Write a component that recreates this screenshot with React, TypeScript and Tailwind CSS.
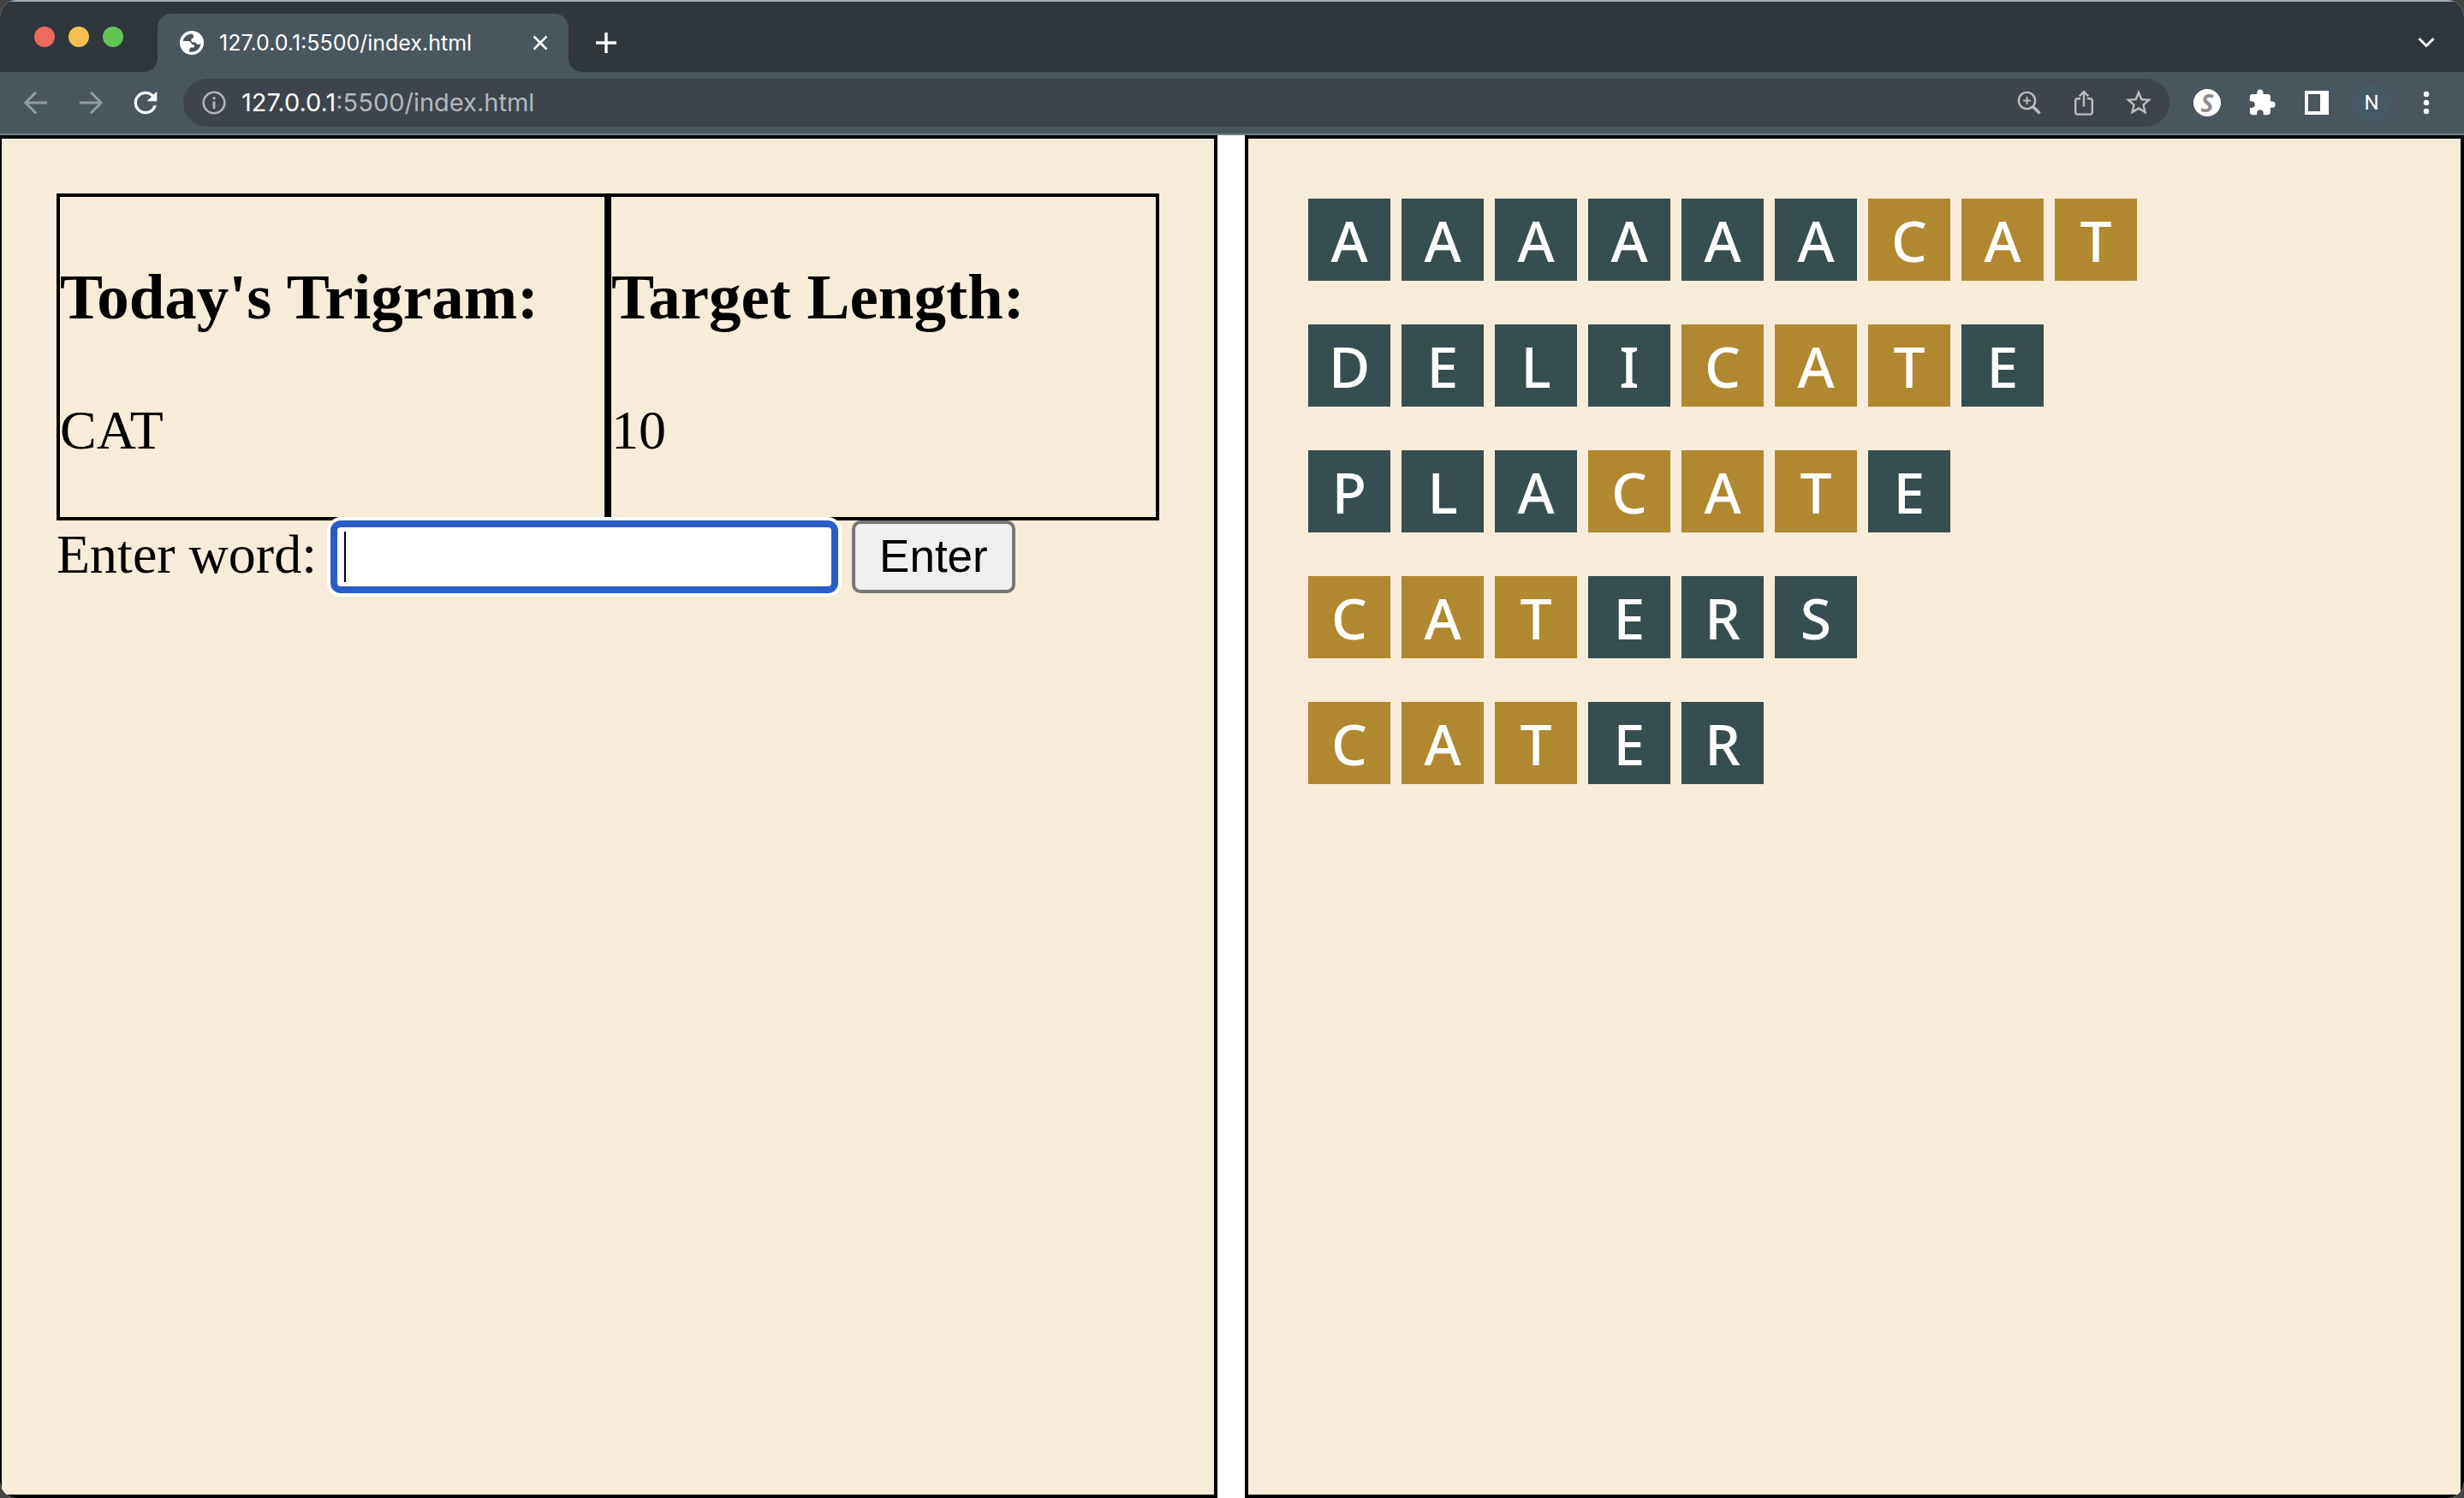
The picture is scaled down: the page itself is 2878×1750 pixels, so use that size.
import React from "react";
import { MdStarBorder, MdExtension, MdRefresh } from "react-icons/md";

const TRIGRAM = "CAT";
const TARGET_LENGTH = 10;
const WORDS = ["AAAAAACAT", "DELICATE", "PLACATE", "CATERS", "CATER"];

function Globe() {
  return (
    <svg viewBox="0 0 28 28" className="size-7" aria-hidden="true">
      <path
        fill="currentColor"
        fillRule="evenodd"
        d="M14 0a14 14 0 1 0 0 28a14 14 0 0 0 0-28ZM14.500 3.400C9 3.600 4.600 7 3.600 12H9c3.200 0 5 1.800 5 4.200h2.800v3.200H13c-1.600 1.200-2 3-2 5c7 1.800 13.200-3.200 13.400-9.600c-2 2.200-5.400 1.200-6-1.200l-4-.400c-1.800-2.400-1.200-4.400 1.600-4.900c.600-1.800-.300-3.600-1.500-4.900Z"
      />
    </svg>
  );
}

function TabBar() {
  return (
    <div className="flex h-[84px] items-end border-t-2 border-[#a4aaad] bg-[#2f363c] pl-10">
      <div className="mb-[29px] flex gap-4">
        <button aria-label="Close window" className="size-6 rounded-full bg-[#ed6a5e]" />
        <button aria-label="Minimize window" className="size-6 rounded-full bg-[#f5bf4f]" />
        <button aria-label="Zoom window" className="size-6 rounded-full bg-[#62c554]" />
      </div>
      <svg className="ml-6 size-4 text-[#49565e]" viewBox="0 0 16 16" aria-hidden="true">
        <path d="M16 0v16H0C9 16 16 9 16 0Z" fill="currentColor" />
      </svg>
      <div className="flex h-[68px] w-[480px] items-center rounded-t-2xl bg-[#49565e] pr-6 pl-[26px] text-white">
        <Globe />
        <span className="ml-[18px] flex-1 text-[25px] leading-8">127.0.0.1:5500/index.html</span>
        <button aria-label="Close tab" className="flex size-[18px] items-center">
          <svg viewBox="0 0 18 18" className="size-[18px]" fill="none" stroke="currentColor" strokeWidth="2.6">
            <path d="M1.5 1.5l15 15M16.5 1.5l-15 15" />
          </svg>
        </button>
      </div>
      <svg className="size-4 text-[#49565e]" viewBox="0 0 16 16" aria-hidden="true">
        <path d="M0 0v16h16C7 16 0 9 0 0Z" fill="currentColor" />
      </svg>
      <button aria-label="New tab" className="mb-[22px] ml-4 text-white">
        <svg viewBox="0 0 24 24" className="size-6" fill="none" stroke="currentColor" strokeWidth="3.4">
          <path d="M12 0v24M0 12h24" />
        </svg>
      </button>
      <button aria-label="Search tabs" className="mr-[34px] mb-[27px] ml-auto text-white">
        <svg viewBox="0 0 20 14" className="h-[14px] w-5" fill="none" stroke="currentColor" strokeWidth="3">
          <path d="M1.5 2L10 10.500L18.500 2" />
        </svg>
      </button>
    </div>
  );
}

function AddressBar() {
  return (
    <div className="flex h-[56px] min-w-0 flex-1 items-center rounded-full bg-[#3d444b] pr-[18px] pl-[22px] text-[#bdbdbd]">
      <svg viewBox="0 0 28 28" className="size-7 text-[#b0b3b5]" fill="none" stroke="currentColor" strokeWidth="2.6">
        <circle cx="14" cy="14" r="12.300" />
        <path d="M14 12.500v8.500M14 7.200v3" strokeWidth="3" />
      </svg>
      <div
        role="textbox"
        aria-label="Address and search bar"
        tabIndex={0}
        className="ml-[18px] flex-1 text-[29px] leading-9 text-[#b4b8bb]"
      >
        <span className="text-white">127.0.0.1</span>:5500/index.html
      </div>
      <button aria-label="Zoom level" className="mr-[38px]">
        <svg viewBox="0 0 28 28" className="size-7" fill="none" stroke="currentColor" strokeWidth="2.4">
          <circle cx="11.500" cy="11.500" r="9.600" />
          <path d="M11.500 7v9M7 11.500h9" strokeWidth="2" />
          <path d="M18.500 18.500l8 8" strokeWidth="3.600" />
        </svg>
      </button>
      <button aria-label="Share" className="mr-[34px]">
        <svg viewBox="0 0 24 30" className="h-[30px] w-6" fill="none" stroke="currentColor" strokeWidth="2.400">
          <path d="M8 10.200H4.400a2.200 2.200 0 0 0-2.200 2.200v14a2.200 2.200 0 0 0 2.200 2.200h15.200a2.200 2.200 0 0 0 2.200-2.200v-14a2.200 2.200 0 0 0-2.200-2.200H16M12 19.500V2.500M6.800 7.300L12 2.100l5.200 5.200" />
        </svg>
      </button>
      <button aria-label="Bookmark this page">
        <MdStarBorder className="size-9" />
      </button>
    </div>
  );
}

function Toolbar() {
  return (
    <div className="flex h-[74px] items-center border-b-2 border-[#727f84] bg-[#49565e] text-white">
      <div className="ml-[28px] flex items-center gap-9 text-[#959da2]">
        <button aria-label="Back">
          <svg viewBox="0 0 28 28" className="size-7" fill="none" stroke="currentColor" strokeWidth="2.800">
            <path d="M27 14H2.500M14 1.800L1.800 14L14 26.200" />
          </svg>
        </button>
        <button aria-label="Forward">
          <svg viewBox="0 0 28 28" className="size-7" fill="none" stroke="currentColor" strokeWidth="2.800">
            <path d="M1 14h24.500M14 1.800L26.200 14L14 26.200" />
          </svg>
        </button>
      </div>
      <button aria-label="Reload" className="mr-6 ml-[30px] text-white">
        <MdRefresh className="size-10" />
      </button>
      <AddressBar />
      <div className="mr-[40px] ml-7 flex items-center">
        <button
          aria-label="S extension"
          className="flex size-8 items-center justify-center rounded-full bg-white font-['Noto_Sans',sans-serif] text-[28px] leading-8 font-bold text-[#8f8f8f] italic"
        >
          S
        </button>
        <button aria-label="Extensions" className="mr-[31px] ml-[31px]">
          <MdExtension className="size-[34px]" />
        </button>
        <button aria-label="Side panel" className="ml-[2px]">
          <svg viewBox="0 0 28 28" className="size-7" fill="currentColor">
            <path fillRule="evenodd" d="M0 0h28v28H0ZM4 4v20h14V4Z" />
          </svg>
        </button>
        <button
          aria-label="Profile"
          className="ml-7 flex size-11 items-center justify-center rounded-full bg-[#455a64] font-['Roboto',sans-serif] text-[24px] leading-8"
        >
          N
        </button>
        <button aria-label="Menu" className="ml-[38px]">
          <svg viewBox="0 0 8 28" className="h-7 w-2" fill="currentColor">
            <circle cx="4" cy="4" r="3.200" />
            <circle cx="4" cy="14" r="3.200" />
            <circle cx="4" cy="24" r="3.200" />
          </svg>
        </button>
      </div>
    </div>
  );
}

function GuessRow({ word }: { word: string }) {
  const start = word.indexOf(TRIGRAM);
  return (
    <li className="flex gap-[13px]">
      {word.split("").map((letter, i) => (
        <span
          key={i}
          className={
            i >= start && i < start + TRIGRAM.length
              ? "flex size-24 items-center justify-center bg-[#b0882f]"
              : "flex size-24 items-center justify-center bg-[#374e50]"
          }
        >
          {letter}
        </span>
      ))}
    </li>
  );
}

function InfoCell({ title, value }: { title: string; value: string | number }) {
  return (
    <div className="border-4 border-black pt-[75px] pb-16">
      <h3 className="text-[75px] leading-[84px] font-bold">{title}</h3>
      <p className="mt-[77px]">{value}</p>
    </div>
  );
}

export default function App() {
  return (
    <div className="flex min-h-screen flex-col bg-[#444444]">
      <div className="flex flex-1 flex-col overflow-hidden rounded-[20px] bg-white">
        <header className="font-['Inter',sans-serif]">
          <TabBar />
          <Toolbar />
        </header>
        <main className="-ml-[2px] grid flex-1 grid-cols-2 gap-8 text-black">
          <section className="border-4 border-black bg-[#f7ebda] p-16 font-['Liberation_Serif',serif] text-[64px] leading-[74px]">
            <div className="grid grid-cols-2">
              <InfoCell title="Today's Trigram:" value={TRIGRAM} />
              <InfoCell title="Target Length:" value={TARGET_LENGTH} />
            </div>
            <form className="flex items-start" onSubmit={(e) => e.preventDefault()}>
              <label htmlFor="word" className="leading-[80px]">
                Enter word:
              </label>
              <div className="relative ml-4">
                <input
                  id="word"
                  type="text"
                  autoComplete="off"
                  className="block h-[85px] w-[593px] rounded-xl border-8 border-[#285dc5] bg-white px-2 font-['Liberation_Sans',sans-serif] text-[53px] ring-4 ring-white outline-none"
                />
                <span className="absolute top-[13px] left-4 h-[59px] w-[2px] bg-black" />
              </div>
              <button
                type="submit"
                className="ml-4 h-[85px] w-[191px] rounded-[10px] border-4 border-[#767676] bg-[#efefef] pb-[2px] font-['Liberation_Sans',sans-serif] text-[53px] leading-[60px]"
              >
                Enter
              </button>
            </form>
          </section>
          <section className="border-4 border-black bg-[#f7ebda] p-[70px]">
            <ul className="flex flex-col gap-[51px] font-['Noto_Sans',sans-serif] text-[66px] leading-[96px] font-medium text-white">
              {WORDS.map((word) => (
                <GuessRow key={word} word={word} />
              ))}
            </ul>
          </section>
        </main>
      </div>
    </div>
  );
}
